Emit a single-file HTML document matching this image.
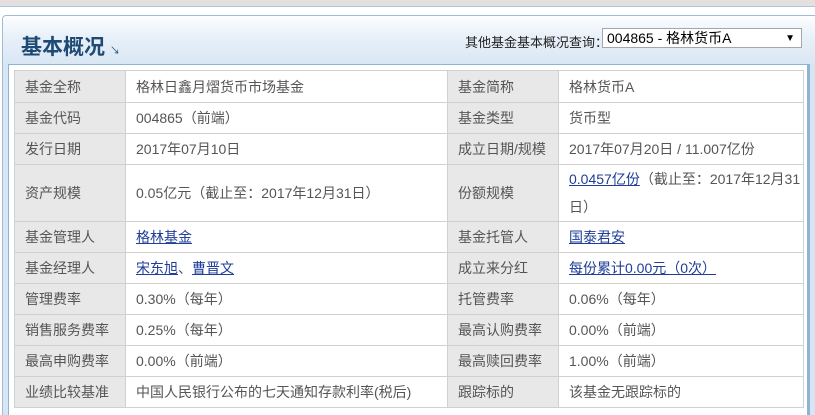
<!DOCTYPE html>
<html style="overflow:hidden;width:815px;height:415px"><head><meta charset="utf-8"><style>
*{margin:0;padding:0;box-sizing:border-box}
body{width:815px;height:415px;overflow:hidden;background:#fff;font-family:"Liberation Sans","Noto Sans CJK SC",sans-serif;position:relative}
.top{position:absolute;left:0;top:0;width:815px;height:7px;background:#e4e0df;border-bottom:1px solid #a9c6e0}
.panel{position:absolute;left:2px;top:15px;width:820px;height:405px;border:1px solid #9fbdd6;border-radius:4px;background:linear-gradient(#fdfeff,#e9f1f9 20px,#d8e6f3 50px)}
.title{position:absolute;left:21px;top:31px;font-size:21px;font-weight:bold;color:#1e4a75}
.arr{position:absolute;left:110px;top:42px;font-size:10px;color:#1e4a75}
.q{position:absolute;left:465px;top:32px;font-size:13px;color:#222}
.sel{position:absolute;left:602px;top:28px;width:200px;height:20px;border:1px solid #a6a6a6;background:#fff;font-size:14px;color:#000;padding:1px 4px;line-height:16px}
.sel span{position:absolute;right:6px;top:2px;font-size:10px}
.box{position:absolute;left:8px;top:64px;width:802px;height:360px;background:#fff;border:1px solid #8eb4d4;border-right:3px solid #8eb4d4}
table{position:absolute;left:14px;top:70px;border-collapse:collapse;width:790px;font-size:14px;color:#555}
td{border:1px solid #d0d0d0;padding:0 0 0 10px;height:31px;vertical-align:middle}
td.l{background:#e8e8e8;width:111px}
td.v1{width:322px}
a{color:#1f3d99;text-decoration:underline}
</style></head><body>
<div class="top"></div>
<div class="panel"></div>
<div class="title">基本概况</div><div class="arr">↘</div>
<div class="q">其他基金基本概况查询：</div>
<div class="sel">004865 - 格林货币A<span>▼</span></div>
<div class="box"></div>
<table>
<tr><td class="l" style="height:32px">基金全称</td><td class="v1">格林日鑫月熠货币市场基金</td><td class="l">基金简称</td><td>格林货币A</td></tr>
<tr><td class="l">基金代码</td><td>004865（前端）</td><td class="l">基金类型</td><td>货币型</td></tr>
<tr><td class="l">发行日期</td><td>2017年07月10日</td><td class="l">成立日期/规模</td><td>2017年07月20日 / 11.007亿份</td></tr>
<tr><td class="l" style="height:57px">资产规模</td><td>0.05亿元（截止至：2017年12月31日）</td><td class="l">份额规模</td><td style="line-height:28px;padding-right:2px"><a>0.0457亿份</a>（截止至：2017年12月31日）</td></tr>
<tr><td class="l">基金管理人</td><td><a>格林基金</a></td><td class="l">基金托管人</td><td><a>国泰君安</a></td></tr>
<tr><td class="l">基金经理人</td><td><a>宋东旭</a>、<a>曹晋文</a></td><td class="l">成立来分红</td><td><a>每份累计0.00元（0次）</a></td></tr>
<tr><td class="l">管理费率</td><td>0.30%（每年）</td><td class="l">托管费率</td><td>0.06%（每年）</td></tr>
<tr><td class="l">销售服务费率</td><td>0.25%（每年）</td><td class="l">最高认购费率</td><td>0.00%（前端）</td></tr>
<tr><td class="l">最高申购费率</td><td>0.00%（前端）</td><td class="l">最高赎回费率</td><td>1.00%（前端）</td></tr>
<tr><td class="l">业绩比较基准</td><td>中国人民银行公布的七天通知存款利率(税后)</td><td class="l">跟踪标的</td><td>该基金无跟踪标的</td></tr>
</table>
</body></html>
